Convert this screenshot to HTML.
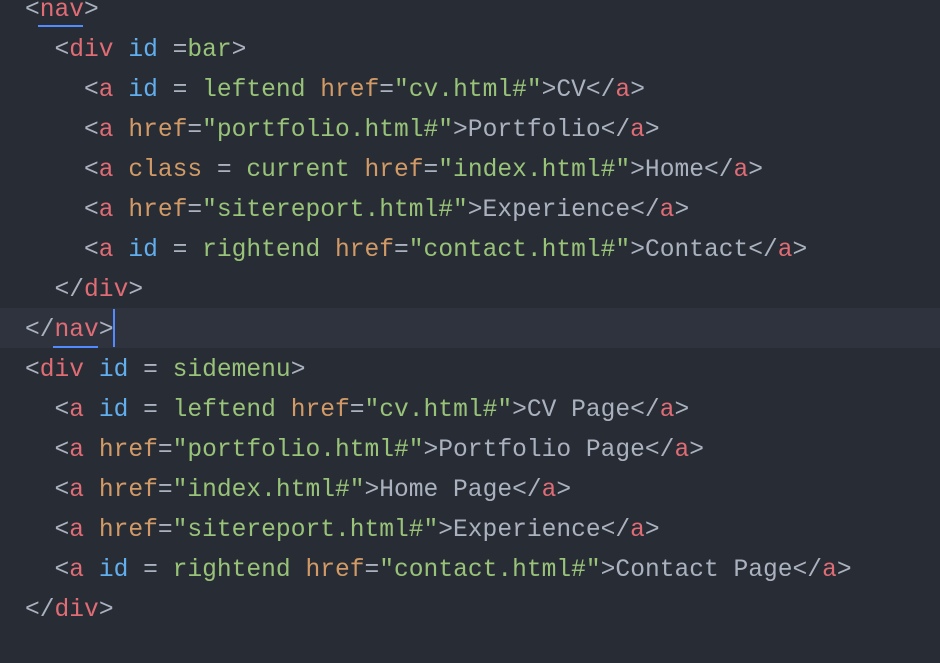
<!DOCTYPE html>
<html><head><style>
html,body{margin:0;padding:0;background:#282c34;width:940px;height:663px;overflow:hidden}
.c{position:absolute;left:25px;top:-9px;font-family:"Liberation Mono",monospace;font-size:24.6px;line-height:40px;color:#abb2bf}
.l{height:40px;white-space:pre}
.t{color:#e06c75}.a{color:#61afef}.s{color:#98c379}.h{color:#d19a66}
.cur{position:absolute;left:0;top:308px;width:940px;height:40px;background:#2e333e}
.u{position:absolute;height:2px;background:#528bff}
.k{position:absolute;left:113px;top:309px;width:2px;height:38px;background:#528bff}
</style></head><body>
<div class="cur"></div>
<div class="u" style="left:38px;top:25px;width:45px"></div>
<div class="u" style="left:53px;top:346px;width:45px"></div>
<div class="k"></div>
<div class="c"><div class="l">&lt;<span class="t">nav</span>&gt;</div><div class="l">  &lt;<span class="t">div</span> <span class="a">id</span> =<span class="s">bar</span>&gt;</div><div class="l">    &lt;<span class="t">a</span> <span class="a">id</span> = <span class="s">leftend</span> <span class="h">href</span>=<span class="s">"cv.html#"</span>&gt;CV&lt;/<span class="t">a</span>&gt;</div><div class="l">    &lt;<span class="t">a</span> <span class="h">href</span>=<span class="s">"portfolio.html#"</span>&gt;Portfolio&lt;/<span class="t">a</span>&gt;</div><div class="l">    &lt;<span class="t">a</span> <span class="h">class</span> = <span class="s">current</span> <span class="h">href</span>=<span class="s">"index.html#"</span>&gt;Home&lt;/<span class="t">a</span>&gt;</div><div class="l">    &lt;<span class="t">a</span> <span class="h">href</span>=<span class="s">"sitereport.html#"</span>&gt;Experience&lt;/<span class="t">a</span>&gt;</div><div class="l">    &lt;<span class="t">a</span> <span class="a">id</span> = <span class="s">rightend</span> <span class="h">href</span>=<span class="s">"contact.html#"</span>&gt;Contact&lt;/<span class="t">a</span>&gt;</div><div class="l">  &lt;/<span class="t">div</span>&gt;</div><div class="l">&lt;/<span class="t">nav</span>&gt;</div><div class="l">&lt;<span class="t">div</span> <span class="a">id</span> = <span class="s">sidemenu</span>&gt;</div><div class="l">  &lt;<span class="t">a</span> <span class="a">id</span> = <span class="s">leftend</span> <span class="h">href</span>=<span class="s">"cv.html#"</span>&gt;CV Page&lt;/<span class="t">a</span>&gt;</div><div class="l">  &lt;<span class="t">a</span> <span class="h">href</span>=<span class="s">"portfolio.html#"</span>&gt;Portfolio Page&lt;/<span class="t">a</span>&gt;</div><div class="l">  &lt;<span class="t">a</span> <span class="h">href</span>=<span class="s">"index.html#"</span>&gt;Home Page&lt;/<span class="t">a</span>&gt;</div><div class="l">  &lt;<span class="t">a</span> <span class="h">href</span>=<span class="s">"sitereport.html#"</span>&gt;Experience&lt;/<span class="t">a</span>&gt;</div><div class="l">  &lt;<span class="t">a</span> <span class="a">id</span> = <span class="s">rightend</span> <span class="h">href</span>=<span class="s">"contact.html#"</span>&gt;Contact Page&lt;/<span class="t">a</span>&gt;</div><div class="l">&lt;/<span class="t">div</span>&gt;</div></div>
</body></html>
